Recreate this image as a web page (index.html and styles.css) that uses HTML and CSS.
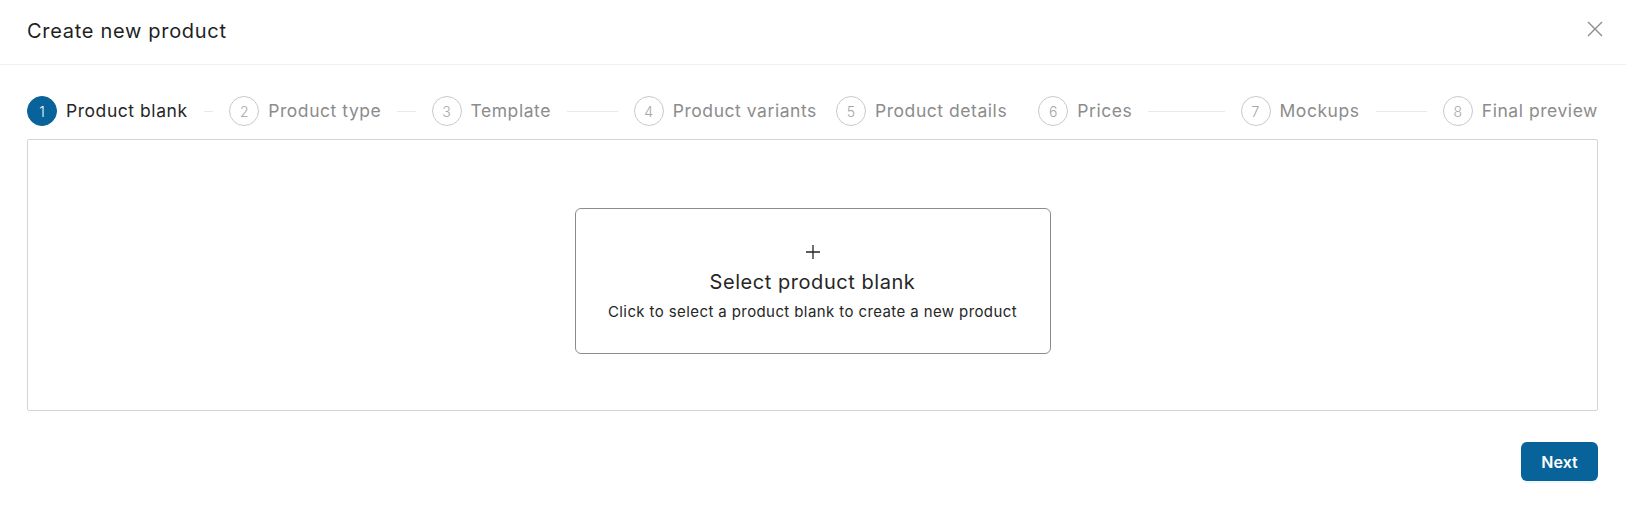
FILE: index.html
```html
<!DOCTYPE html>
<html lang="en">
<head>
<meta charset="utf-8">
<title>Create new product</title>
<link rel="stylesheet" href="styles.css">
</head>
<body>
<div class="modal">
  <div class="modal-header">
    <div class="modal-title">Create new product</div>
    <button class="close-btn" aria-label="Close">
      <svg width="16" height="16" viewBox="0 0 16 16"><path d="M1 1 L15 15 M15 1 L1 15" stroke="#8c8c8c" stroke-width="1.4" fill="none"/></svg>
    </button>
  </div>
  <div class="modal-body">
    <div class="steps">
      <div class="step active"><span class="step-icon">1</span><span class="step-title">Product blank</span><span class="step-tail"></span></div>
      <div class="step"><span class="step-icon">2</span><span class="step-title">Product type</span><span class="step-tail"></span></div>
      <div class="step"><span class="step-icon">3</span><span class="step-title">Template</span><span class="step-tail"></span></div>
      <div class="step"><span class="step-icon">4</span><span class="step-title">Product variants</span><span class="step-tail"></span></div>
      <div class="step"><span class="step-icon">5</span><span class="step-title">Product details</span><span class="step-tail"></span></div>
      <div class="step"><span class="step-icon">6</span><span class="step-title">Prices</span><span class="step-tail"></span></div>
      <div class="step"><span class="step-icon">7</span><span class="step-title">Mockups</span><span class="step-tail"></span></div>
      <div class="step last"><span class="step-icon">8</span><span class="step-title">Final preview</span></div>
    </div>
    <div class="step-content">
      <div class="select-card">
        <svg class="plus" width="14" height="14" viewBox="0 0 14 14"><path d="M7 0 V14 M0 7 H14" stroke="#262626" stroke-width="1.3" fill="none"/></svg>
        <div class="select-title">Select product blank</div>
        <div class="select-sub">Click to select a product blank to create a new product</div>
      </div>
    </div>
    <div class="modal-footer">
      <button class="btn-primary">Next</button>
    </div>
  </div>
</div>
</body>
</html>
```

FILE: styles.css
```css
* { box-sizing: border-box; }
html, body {
  margin: 0;
  padding: 0;
  background: #ffffff;
}
body {
  font-family: "Inter", "Open Sans", sans-serif;
  color: #1f1f1f;
}
.modal {
  width: 1626px;
  height: 505px;
  background: #fff;
}
.modal-header {
  height: 65px;
  border-bottom: 1px solid #f0f0f0;
  display: flex;
  align-items: center;
  justify-content: space-between;
  padding: 0 23px 0 27px;
}
.modal-title {
  font-size: 20px;
  font-weight: 400;
  color: #1f1f1f;
  letter-spacing: 0.7px;
  margin-top: -3px;
}
.close-btn {
  border: 0;
  background: transparent;
  padding: 0;
  width: 16px;
  height: 16px;
  display: flex;
  cursor: pointer;
  margin-top: -6px;
}
.modal-body {
  padding: 31px 28px 0 27px;
}
.steps {
  display: flex;
  height: 30px;
}
.step {
  flex: 1 1 0;
  min-width: 0;
  overflow: hidden;
  display: flex;
  align-items: center;
  padding-left: 16px;
}
.step:first-child { padding-left: 0; }
.step.last { flex: none; }
.step-icon {
  flex: none;
  width: 30px;
  height: 30px;
  border-radius: 50%;
  border: 1px solid #c9c9c9;
  color: #a6a6a6;
  font-size: 14px;
  font-weight: 300;
  display: flex;
  align-items: center;
  justify-content: center;
  margin-right: 9px;
}
.step.active .step-icon {
  background: #07639a;
  border-color: #07639a;
  color: #fff;
}
.step-title {
  flex: none;
  white-space: nowrap;
  font-size: 17.5px;
  letter-spacing: 0.55px;
  color: #8c8c8c;
  margin-right: 16px;
  margin-top: -2px;
}
.step.last .step-title { margin-right: 0; }
.step.active .step-title { color: #262626; }
.step-tail {
  flex: 1 1 0;
  min-width: 0;
  height: 1px;
  background: #e9e9e9;
}
.step-content {
  margin-top: 13px;
  height: 272px;
  border: 1px solid #d4d4d4;
  border-radius: 2px;
  display: flex;
  justify-content: center;
  align-items: flex-start;
  padding-top: 68px;
}
.select-card {
  width: 476px;
  height: 146px;
  border: 1px solid #8c8c8c;
  border-radius: 6px;
  display: flex;
  flex-direction: column;
  align-items: center;
  padding-top: 36px;
  cursor: pointer;
}
.plus { display: block; }
.select-title {
  font-size: 20px;
  letter-spacing: 0.55px;
  color: #262626;
  line-height: 26px;
  margin-top: 10px;
}
.select-sub {
  font-size: 15px;
  letter-spacing: 0.4px;
  color: #262626;
  line-height: 22px;
  margin-top: 6px;
}
.modal-footer {
  display: flex;
  justify-content: flex-end;
  margin-top: 31px;
}
.btn-primary {
  width: 77px;
  height: 39px;
  border: 0;
  border-radius: 6px;
  background: #07639a;
  color: #fff;
  font-family: "Inter", sans-serif;
  font-size: 16px;
  font-weight: 600;
  box-shadow: 0 2px 0 rgba(5, 145, 255, 0.08);
  cursor: pointer;
}
```
